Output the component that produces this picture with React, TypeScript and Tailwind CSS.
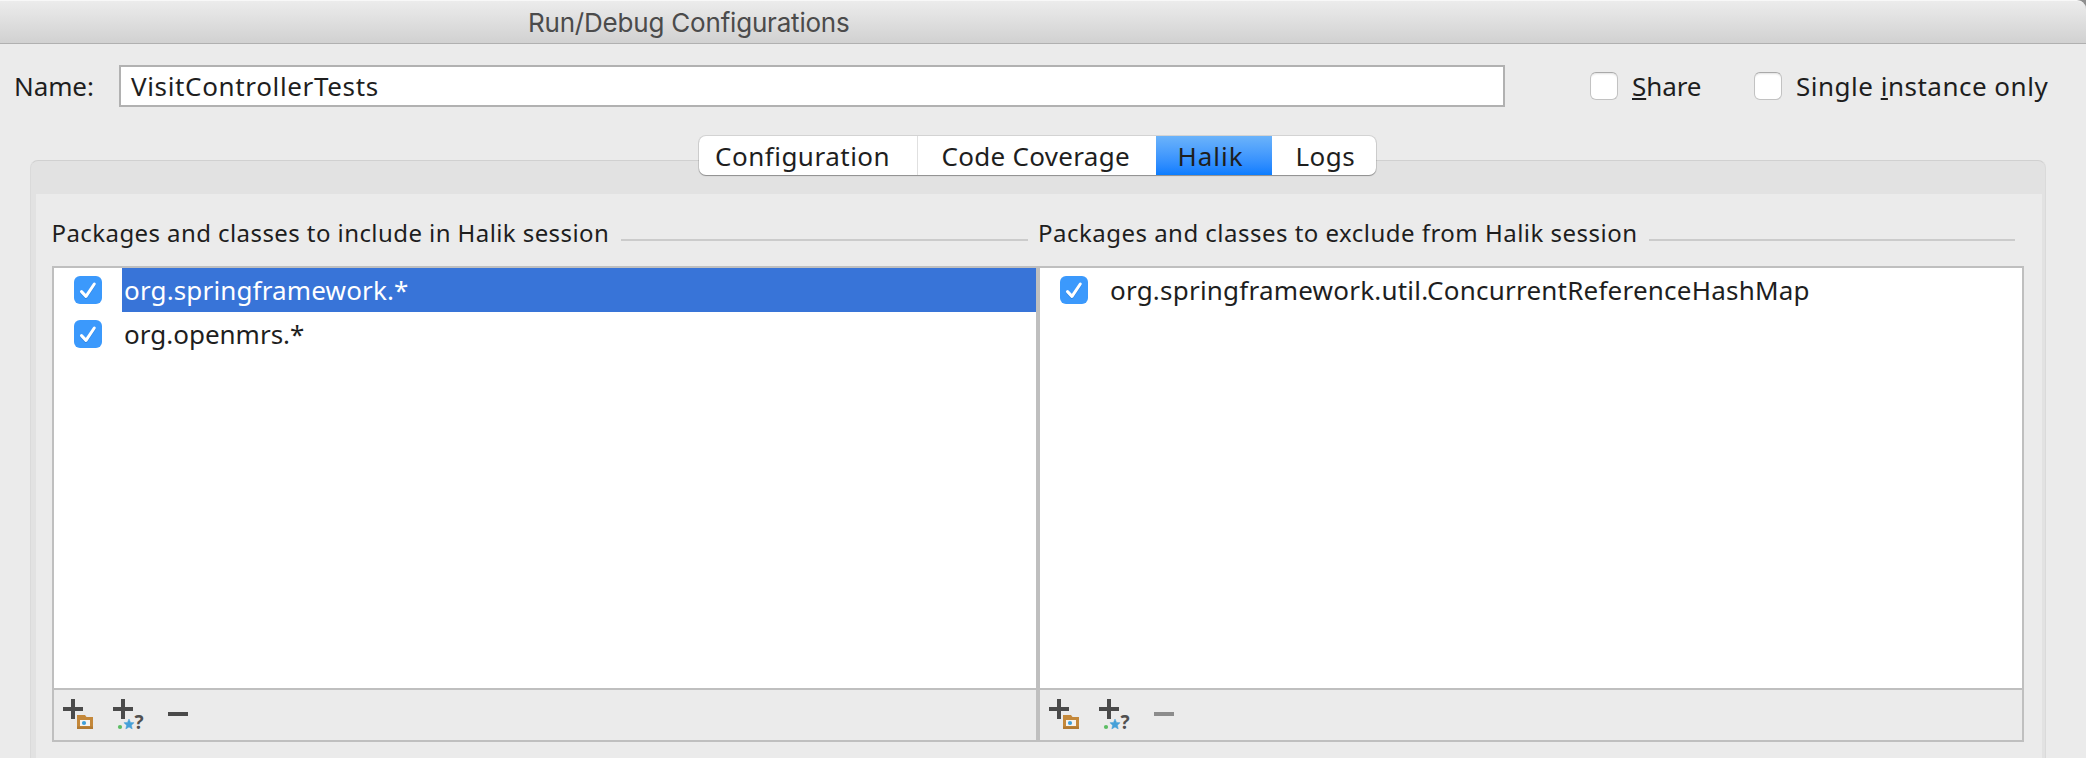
const ink = '#4a4a4a';

function EmptyCheckbox() {
  return (
    <span className="h-7 w-7 shrink-0 rounded-[6px] border border-[#c2c2c2] border-t-[#a9a9a9] bg-white shadow-[inset_0_2px_2px_-1px_rgba(0,0,0,0.12)]" />
  );
}

function CheckedBox() {
  return (
    <span className="h-7 w-7 shrink-0 rounded-[6px] bg-[#3b99fc]">
      <svg width="28" height="28" viewBox="0 0 28 28" fill="none" className="block">
        <path d="M7.5 15.6 12 20.4 20.3 8" stroke="#1f6fc9" strokeOpacity="0.5" strokeWidth="3" strokeLinecap="round" strokeLinejoin="round" transform="translate(0 1)" />
        <path d="M7.5 15.6 12 20.4 20.3 8" stroke="#fff" strokeWidth="3" strokeLinecap="round" strokeLinejoin="round" />
      </svg>
    </span>
  );
}

function AddPackageIcon() {
  return (
    <svg width="36" height="40" viewBox="0 0 36 40" className="block shrink-0">
      <path d="M11 5h4v8h8v4h-8v8h-4v-8H3v-4h8z" fill={ink} />
      <path d="M17 21h8l1.5 2H33v12H17z" fill="#c4883a" />
      <path d="M17 32.5h16V35H17z" fill="#b27a32" />
      <rect x="20" y="26" width="10" height="6" fill="#f7f3ee" />
      <circle cx="24" cy="29" r="2.1" fill="#3f9fd8" />
    </svg>
  );
}

function AddPatternIcon() {
  return (
    <svg width="36" height="40" viewBox="0 0 36 40" className="block shrink-0">
      <path d="M11 5h4v8h8v4h-8v8h-4v-8H3v-4h8z" fill={ink} />
      <circle cx="10" cy="33" r="2.1" fill="#5bbd63" />
      <path d="M19 25l1.5 3.4 3.6.3-2.7 2.5.8 3.7L19 33l-3.2 1.9.8-3.7-2.7-2.5 3.6-.3z" fill="#45a0d8" stroke="#45a0d8" strokeWidth="0.5" />
      <text x="24.4" y="35" fontFamily="'Noto Sans', sans-serif" fontSize="19" fontWeight="700" fill="#505050">?</text>
    </svg>
  );
}

function RemoveIcon({ disabled }: { disabled?: boolean }) {
  return (
    <svg width="26" height="40" viewBox="0 0 26 40" className="ml-[5px] block shrink-0">
      <rect x="3" y="18" width="20" height="4" fill={disabled ? '#8c8c8c' : ink} />
    </svg>
  );
}

type Item = { label: string; tracking: string; selected?: boolean };

function ClassList(props: { title: string; titleClass: string; lineClass: string; items: Item[]; removeDisabled?: boolean }) {
  return (
    <section className="flex w-[986px] flex-col">
      <div className="flex h-[42px] items-center text-[24px] whitespace-pre">
        <h2 className={props.titleClass}>{props.title}</h2>
        <div className={props.lineClass} />
      </div>
      <div className="mt-3 flex h-[476px] flex-col border-2 border-[#bfbfbf]">
        <ul className="h-[420px] bg-white">
          {props.items.map((item) => (
            <li key={item.label} className="flex h-11 items-center">
              <div className="flex w-[68px] shrink-0 pl-5">
                <CheckedBox />
              </div>
              <span
                className={`flex h-full flex-1 items-center pl-[2px] ${item.tracking} ${item.selected ? 'bg-[#3874d8] text-white' : ''}`}
              >
                {item.label}
              </span>
            </li>
          ))}
        </ul>
        <div className="flex flex-1 items-start gap-3.5 border-t-2 border-[#bfbfbf] pt-1 pl-1.5">
          <AddPackageIcon />
          <AddPatternIcon />
          <RemoveIcon disabled={props.removeDisabled} />
        </div>
      </div>
    </section>
  );
}

export default function App() {
  return (
    <div className="h-[758px] w-[2086px] overflow-hidden bg-[#ebebeb] font-['Noto_Sans',sans-serif] text-[26px] leading-none text-[#1e1e1e]">
      <div className="bg-[#8e8e8e]">
        <header className="flex h-11 items-center rounded-tr-[9px] border-t border-b border-t-[#f8f8f8] border-b-[#b0b0b0] bg-gradient-to-b from-[#ececec] to-[#d1d1d1] pt-[2px] pl-[528px] font-['Inter',sans-serif]">
          <h1 className="tracking-[-0.2px] text-[#4b4b4b]">Run/Debug Configurations</h1>
        </header>
      </div>

      <div className="mt-[21px] flex h-[42px] items-center whitespace-pre">
        <label className="w-[119px] pl-[14px] tracking-[-0.1px]">Name:</label>
        <div className="flex h-full w-[1386px] items-center border-2 border-[#b1b1b1] bg-white pl-[10px] tracking-[0.65px]">
          VisitControllerTests
        </div>
        <label className="ml-[85px] flex w-[164px] items-center gap-[14px]">
          <EmptyCheckbox />
          <span className="tracking-[-0.1px]">
            <span className="underline decoration-2 underline-offset-[2px]">S</span>hare
          </span>
        </label>
        <label className="flex items-center gap-[14px]">
          <EmptyCheckbox />
          <span className="tracking-[0.5px]">
            Single <span className="underline decoration-2 underline-offset-[2px]">i</span>nstance only
          </span>
        </label>
      </div>

      <nav className="relative z-10 mt-[29px] ml-[699px] flex h-[39px] w-[677px] rounded-[7px] bg-white whitespace-pre shadow-[0_0_0_1px_rgba(0,0,0,0.1),0_1px_1px_rgba(0,0,0,0.3)]">
        <div className="flex w-[219px] items-center border-r border-[#e0e0e0] pl-[16px] tracking-[0.5px]">Configuration</div>
        <div className="flex w-[238px] items-center pl-[23.5px] tracking-[0.3px]">Code Coverage</div>
        <div className="flex w-[116px] items-center bg-gradient-to-b from-[#6bb3fa] to-[#087dff] pl-[21.5px] tracking-[1px]">Halik</div>
        <div className="flex items-center pl-[23.5px] tracking-[0.5px]">Logs</div>
      </nav>

      <main className="-mt-[15px] mr-10 ml-[30px] h-[598px] rounded-t-[8px] border-t border-r border-l border-t-[#d0d0d0] border-r-[#dadada] border-l-[#dadada] bg-[#e2e2e2] pt-[33px] pr-[3px] pl-[5px]">
        <div className="flex h-full bg-[#ebebeb] pt-[18px] pl-4">
          <ClassList
            title="Packages and classes to include in Halik session"
            titleClass="-ml-[0.5px] tracking-[0.42px]"
            lineClass="mt-[14px] ml-auto mr-[10px] h-0.5 w-[407px] bg-[#cbcbcb]"
            items={[
              { label: 'org.springframework.*', tracking: 'tracking-[0.15px]', selected: true },
              { label: 'org.openmrs.*', tracking: 'tracking-normal' },
            ]}
          />
          <ClassList
            title="Packages and classes to exclude from Halik session"
            titleClass="tracking-[0.48px]"
            lineClass="mt-[14px] ml-auto mr-[9px] h-0.5 w-[366px] bg-[#cbcbcb]"
            items={[{ label: 'org.springframework.util.ConcurrentReferenceHashMap', tracking: 'tracking-[0.22px]' }]}
            removeDisabled
          />
        </div>
      </main>
    </div>
  );
}
